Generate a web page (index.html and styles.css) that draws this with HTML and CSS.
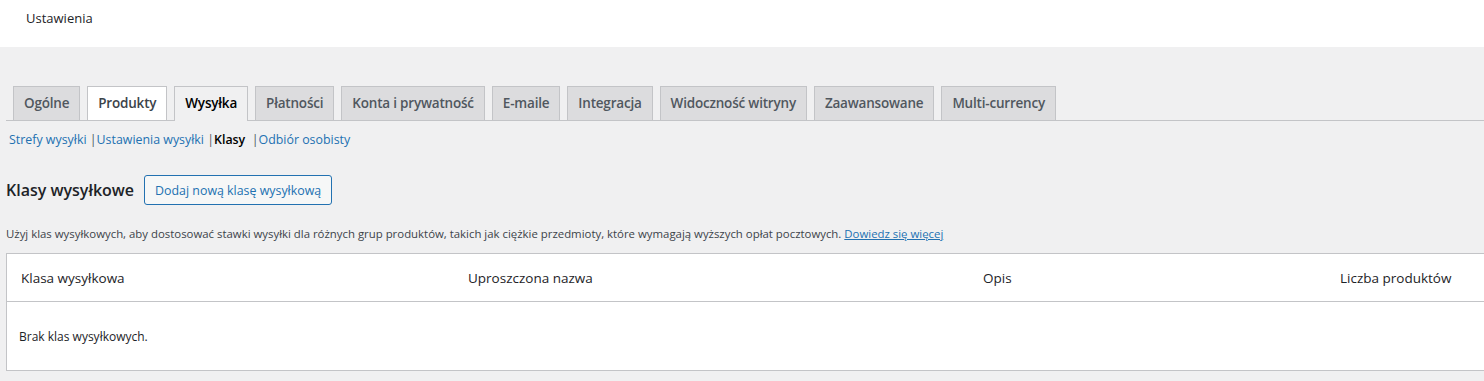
FILE: index.html
```html
<!DOCTYPE html>
<html lang="pl">
<head>
    <meta charset="utf-8" />
    <title>Ustawienia</title>
    <link rel="stylesheet" href="styles.css">
</head>
<body>
    <header class="top-bar">
        <h1 class="page-title">Ustawienia</h1>
    </header>
    <div class="wrap">
        <nav class="nav-tabs">
            <a class="nav-tab">Ogólne</a>
            <a class="nav-tab nav-tab-hover">Produkty</a>
            <a class="nav-tab nav-tab-active">Wysyłka</a>
            <a class="nav-tab">Płatności</a>
            <a class="nav-tab">Konta i prywatność</a>
            <a class="nav-tab">E-maile</a>
            <a class="nav-tab">Integracja</a>
            <a class="nav-tab">Widoczność witryny</a>
            <a class="nav-tab">Zaawansowane</a>
            <a class="nav-tab">Multi-currency</a>
        </nav>
        <ul class="subsubsub">
            <li><a href="#">Strefy wysyłki</a> |</li>
            <li><a href="#">Ustawienia wysyłki</a> |</li>
            <li><span class="current">Klasy</span>  |</li>
            <li><a href="#">Odbiór osobisty</a></li>
        </ul>
        <div class="section-head">
            <h2 class="section-title">Klasy wysyłkowe</h2>
            <button class="button">Dodaj nową klasę wysyłkową</button>
        </div>
        <p class="description">Użyj klas wysyłkowych, aby dostosować stawki wysyłki dla różnych grup produktów, takich jak ciężkie przedmioty, które wymagają wyższych opłat pocztowych. <a href="#">Dowiedz się więcej</a></p>
        <div class="table-clip">
            <table class="classes-table">
                <thead>
                    <tr>
                        <th class="col-name">Klasa wysyłkowa</th>
                        <th class="col-slug">Uproszczona nazwa</th>
                        <th class="col-desc">Opis</th>
                        <th class="col-count">Liczba produktów</th>
                    </tr>
                </thead>
                <tbody>
                    <tr>
                        <td class="empty" colspan="4">Brak klas wysyłkowych.</td>
                    </tr>
                </tbody>
            </table>
        </div>
    </div>
</body>
</html>
```

FILE: styles.css
```css
html, body {
    margin: 0;
    overflow: hidden;
}

body {
    background-color: #f0f0f1;
    color: #1d2327;
    font-family: "Segoe UI", "Open Sans", "Noto Sans", sans-serif;
    font-size: 13px;
}

a {
    color: #2271b1;
    text-decoration: none;
}

/* górny pasek */
.top-bar {
    height: 47px;
    background: #fff;
    display: flex;
    align-items: center;
    padding-left: 26px;
    box-sizing: border-box;
}

.page-title {
    margin: 0;
    font-size: 13px;
    font-weight: 400;
    color: #1d2327;
    padding-bottom: 12px;
}

.wrap {
    padding: 39px 0 0 6px;
}

/* zakładki */
.nav-tabs {
    display: flex;
    align-items: flex-end;
    border-bottom: 1px solid #c3c4c7;
    padding-left: 7px;
    gap: 7px;
}

.nav-tab {
    display: block;
    padding: 5px 10px;
    line-height: 23px;
    font-size: 13.5px;
    font-weight: 600;
    color: #50575e;
    background: #dcdcde;
    border: 1px solid #c3c4c7;
    border-bottom: none;
    white-space: nowrap;
    letter-spacing: -0.2px;
}

.nav-tab-hover {
    background: #fff;
    color: #3c434a;
}

.nav-tab-active {
    background: #f0f0f1;
    color: #000;
    margin-bottom: -1px;
    padding-bottom: 6px;
}

/* podmenu */
.subsubsub {
    list-style: none;
    margin: 8px 0 0 3px;
    padding: 0;
    display: flex;
    color: #50575e;
    font-size: 12.4px;
    line-height: 22px;
}

.subsubsub li {
    white-space: pre;
}

.subsubsub .current {
    color: #000;
    font-weight: 600;
}

/* nagłówek sekcji */
.section-head {
    display: flex;
    align-items: center;
    gap: 10px;
    margin-top: 24px;
}

.section-title {
    margin: 0;
    font-size: 16px;
    font-weight: 600;
    color: #1d2327;
}

.button {
    font-family: inherit;
    font-size: 12.4px;
    color: #2271b1;
    background: #f6f7f7;
    border: 1px solid #2271b1;
    border-radius: 3px;
    height: 30px;
    padding: 0 10px;
    cursor: pointer;
}

.description {
    margin: 19px 0 0;
    font-size: 11.4px;
    line-height: 20px;
    color: #3c434a;
}

.description a {
    text-decoration: underline;
}

/* tabela */
.table-clip {
    margin-top: 9px;
}

.classes-table {
    width: 1490px;
    border-collapse: collapse;
    background: #fff;
    border: 1px solid #c3c4c7;
    font-size: 13px;
}

.classes-table th {
    height: 47px;
    font-weight: 400;
    font-size: 13.5px;
    color: #1d2327;
    border-bottom: 1px solid #c3c4c7;
    padding: 0;
    text-align: left;
}

.col-name {
    width: 447px;
    padding-left: 14px !important;
}

.col-slug {
    width: 515px;
}

.col-desc {
    width: 357px;
}

.empty {
    height: 68px;
    padding: 0 0 0 12px;
    font-size: 12px;
    color: #1d2327;
}
```
